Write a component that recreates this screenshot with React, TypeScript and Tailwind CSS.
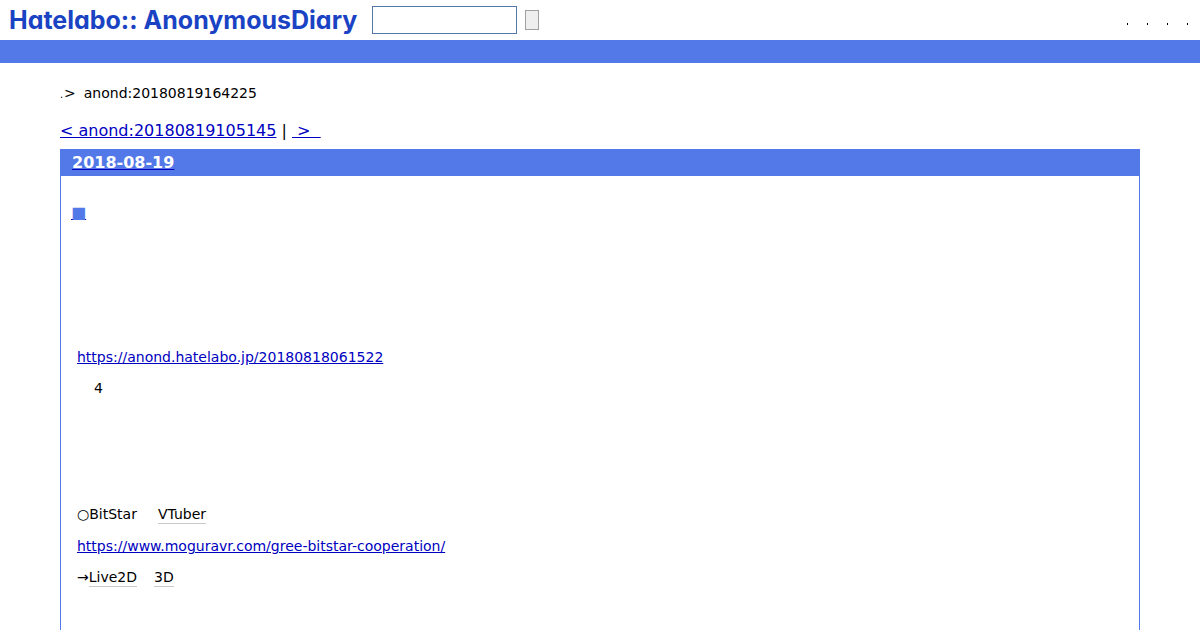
import React from "react";

const menuItems = ["Ranking", "Keywords", "Register", "Login"];

function Header() {
  return (
    <header>
      <div className="flex h-10 items-center bg-white pl-[9px] pr-[11px]">
        <a
          href="/"
          aria-label="Hatelabo::AnonymousDiary"
          className="flex gap-1.5 whitespace-nowrap font-['Inter'] text-[25px] leading-10 font-bold text-[#1a43c4] [font-feature-settings:'cv11']"
        >
          <span>Hatelabo::</span>
          <span>AnonymousDiary</span>
        </a>
        <form className="ml-[15px] flex items-center gap-2" onSubmit={(e) => e.preventDefault()}>
          <input
            type="text"
            aria-label="Search"
            className="h-7 w-[145px] border border-[#5279a8] bg-white px-1 text-sm outline-none"
          />
          <button
            type="submit"
            aria-label="Submit search"
            className="h-5 w-[14px] border border-[#a0a0a0] bg-[#efefef]"
          />
        </form>
        <nav className="ml-auto flex gap-[18px] pt-2">
          {menuItems.map((item) => (
            <a key={item} href="/" aria-label={item} className="h-[3px] w-[2px]">
              <span className="block h-[2px] w-px bg-black" />
            </a>
          ))}
        </nav>
      </div>
      <div className="h-[23px] bg-[#5279e7]" />
    </header>
  );
}

function Keyword({ children }: { children: React.ReactNode }) {
  return (
    <a href="/keyword" className="inline-block border-b border-[#c8c8c8] leading-[18px] text-black">
      {children}
    </a>
  );
}

export default function App() {
  return (
    <div className="flex min-h-screen flex-col bg-white font-['DejaVu_Sans',sans-serif] text-sm text-black">
      <Header />
      <main className="mx-[60px] flex flex-1 flex-col">
        <div className="mt-5 flex items-baseline leading-5">
          <a href="/" className="w-1 text-[10px]">.</a>
          <span>&gt;</span>
          <span className="ml-2">anond:20180819164225</span>
        </div>
        <nav className="mt-[14px] text-base leading-6 text-[#0000c0]">
          <a href="/20180819105145" className="underline">&lt; anond:20180819105145</a>
          <span className="text-black"> | </span>
          <a href="/next" className="whitespace-pre underline">{" >  "}</a>
        </nav>
        <article className="mt-[6px] flex-1 border-x border-t border-[#5279e7]">
          <h2 className="bg-[#5279e7] pl-[11px] text-base leading-[26px] font-bold text-white">
            <a href="/20180819" className="underline decoration-[#0000c0]">2018-08-19</a>
          </h2>
          <h3 className="mt-[25px] pl-[10px] text-base leading-6 font-bold">
            <a href="/20180819164225" className="text-[#5279e7] underline decoration-[#0000c0]">■</a>
          </h3>
          <div className="mt-[120px] px-4 leading-[25px]">
            <p>
              <a href="https://anond.hatelabo.jp/20180818061522" className="text-[#0000c0] underline">
                https://anond.hatelabo.jp/20180818061522
              </a>
            </p>
            <p className="mt-[6px] pl-[17px]">4</p>
            <p className="mt-[101px] flex items-baseline">
              <span className="mr-[21px]">○BitStar</span>
              <Keyword>VTuber</Keyword>
            </p>
            <p className="mt-[7px]">
              <a href="https://www.moguravr.com/gree-bitstar-cooperation/" className="text-[#0000c0] underline">
                https://www.moguravr.com/gree-bitstar-cooperation/
              </a>
            </p>
            <p className="mt-[6px] flex items-baseline">
              <span>→</span>
              <span className="mr-[17px]"><Keyword>Live2D</Keyword></span>
              <Keyword>3D</Keyword>
            </p>
          </div>
        </article>
      </main>
    </div>
  );
}
